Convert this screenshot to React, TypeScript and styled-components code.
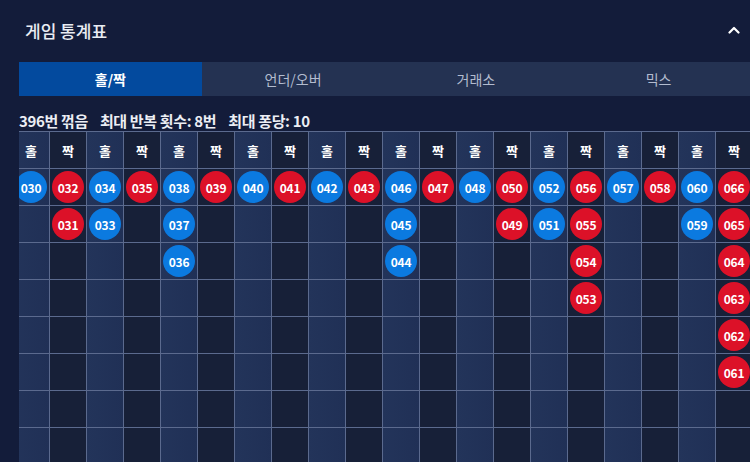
import React from "react";
import styled, { createGlobalStyle } from "styled-components";

const GlobalStyle = createGlobalStyle`
  html, body {
    margin: 0;
    padding: 0;
    background: #131c3a;
    overflow: hidden;
  }
  body {
    font-family: "Noto Sans CJK KR", "Noto Sans", sans-serif;
    color: #e9ecf3;
  }
  * { box-sizing: border-box; }
`;

const Panel = styled.div`
  width: 750px;
  height: 462px;
  padding-left: 19px;
  display: flex;
  flex-direction: column;
  overflow: hidden;
`;

const Header = styled.div`
  height: 62px;
  display: flex;
  align-items: center;
  justify-content: space-between;
  padding: 0 10px 2px 6px;
`;

const Title = styled.h2`
  margin: 0;
  font-size: 17px;
  font-weight: 500;
  color: #e9ecf3;
  letter-spacing: 0px;
`;

const Chevron = styled.svg`
  width: 12px;
  height: 10px;
  display: block;
`;

const Tabs = styled.div`
  display: grid;
  grid-template-columns: repeat(4, 1fr);
  height: 34px;
  background: #243252;
`;

const Tab = styled.div<{ $active?: boolean }>`
  display: flex;
  align-items: center;
  justify-content: center;
  font-size: 14px;
  font-weight: ${(p) => (p.$active ? 700 : 400)};
  color: ${(p) => (p.$active ? "#ffffff" : "#b3bccf")};
  background: ${(p) => (p.$active ? "#034a9e" : "transparent")};
`;

const Stats = styled.div`
  height: 35px;
  display: flex;
  align-items: center;
  gap: 12px;
  padding-top: 13px;
  font-size: 15px;
  font-weight: 700;
  color: #eceef4;
  letter-spacing: -0.35px;
  white-space: nowrap;
`;

const TableViewport = styled.div`
  flex: 1;
  overflow: hidden;
  border-top: 1px solid #5b6a8e;
`;

const Table = styled.div`
  display: flex;
  margin-left: -6px;
`;

const Column = styled.div<{ $light: boolean }>`
  flex: 0 0 37px;
  display: flex;
  flex-direction: column;
  background: ${(p) =>
    p.$light
      ? "linear-gradient(90deg, #23345a 0%, #203056 100%)"
      : "#172038"};
`;

const Cell = styled.div`
  height: 37px;
  border-right: 1px solid #5b6a8e;
  border-bottom: 1px solid #5b6a8e;
  display: flex;
  align-items: center;
  justify-content: center;
`;

const HeadCell = styled(Cell)`
  font-size: 13px;
  font-weight: 700;
  color: #ffffff;
`;

const Ball = styled.div<{ $odd: boolean }>`
  width: 32px;
  height: 32px;
  border-radius: 50%;
  background: ${(p) => (p.$odd ? "#0b7ae0" : "#dc1128")};
  color: #ffffff;
  font-size: 12px;
  font-weight: 700;
  display: flex;
  align-items: center;
  justify-content: center;
  letter-spacing: -0.2px;
`;

const columns: number[][] = [
  [30],
  [32, 31],
  [34, 33],
  [35],
  [38, 37, 36],
  [39],
  [40],
  [41],
  [42],
  [43],
  [46, 45, 44],
  [47],
  [48],
  [50, 49],
  [52, 51],
  [56, 55, 54, 53],
  [57],
  [58],
  [60, 59],
  [66, 65, 64, 63, 62, 61],
];

const ROWS = 8;

const pad = (n: number) => String(n).padStart(3, "0");

export default function App() {
  return (
    <>
      <GlobalStyle />
      <Panel>
        <Header>
          <Title>게임 통계표</Title>
          <Chevron viewBox="0 0 12 10">
            <path
              d="M1.5 7.5 L6 3 L10.5 7.5"
              fill="none"
              stroke="#ffffff"
              strokeWidth="2.2"
              strokeLinecap="round"
              strokeLinejoin="round"
            />
          </Chevron>
        </Header>
        <Tabs>
          <Tab $active>홀/짝</Tab>
          <Tab>언더/오버</Tab>
          <Tab>거래소</Tab>
          <Tab>믹스</Tab>
        </Tabs>
        <Stats>
          <span>396번 꺾음</span>
          <span>최대 반복 횟수: 8번</span>
          <span>최대 퐁당: 10</span>
        </Stats>
        <TableViewport>
          <Table>
            {columns.map((col, i) => {
              const odd = i % 2 === 0;
              return (
                <Column key={i} $light={odd}>
                  <HeadCell>{odd ? "홀" : "짝"}</HeadCell>
                  {Array.from({ length: ROWS }).map((_, r) => (
                    <Cell key={r}>
                      {col[r] !== undefined && (
                        <Ball $odd={odd}>{pad(col[r])}</Ball>
                      )}
                    </Cell>
                  ))}
                </Column>
              );
            })}
          </Table>
        </TableViewport>
      </Panel>
    </>
  );
}
